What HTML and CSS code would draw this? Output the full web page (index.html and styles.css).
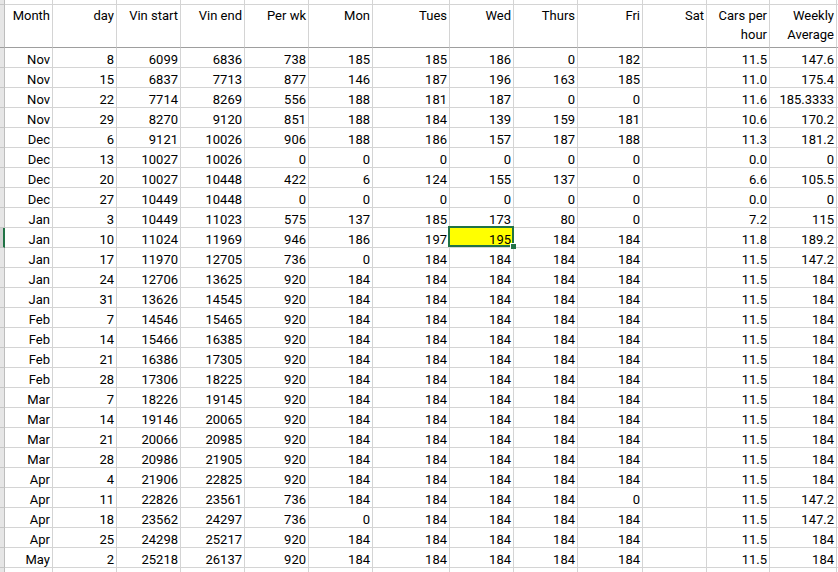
FILE: index.html
```html
<!DOCTYPE html>
<html>
<head>
<meta charset="utf-8">
<link rel="stylesheet" href="styles.css">
</head>
<body>
<div class="sheet">
  <div class="row top"><i class="rh"></i><span></span><span></span><span></span><span></span><span></span><span></span><span></span><span></span><span></span><span></span><span></span><span></span><span></span><span class="x"></span></div>
  <div class="row hdr"><i class="rh"></i><span>Month</span><span>day</span><span>Vin start</span><span>Vin end</span><span>Per wk</span><span>Mon</span><span>Tues</span><span>Wed</span><span>Thurs</span><span>Fri</span><span>Sat</span><span>Cars per hour</span><span>Weekly Average</span><span class="x"></span></div>
  <div class="row"><i class="rh"></i><span>Nov</span><span>8</span><span>6099</span><span>6836</span><span>738</span><span>185</span><span>185</span><span>186</span><span>0</span><span>182</span><span></span><span>11.5</span><span>147.6</span><span class="x"></span></div>
  <div class="row"><i class="rh"></i><span>Nov</span><span>15</span><span>6837</span><span>7713</span><span>877</span><span>146</span><span>187</span><span>196</span><span>163</span><span>185</span><span></span><span>11.0</span><span>175.4</span><span class="x"></span></div>
  <div class="row"><i class="rh"></i><span>Nov</span><span>22</span><span>7714</span><span>8269</span><span>556</span><span>188</span><span>181</span><span>187</span><span>0</span><span>0</span><span></span><span>11.6</span><span>185.3333</span><span class="x"></span></div>
  <div class="row"><i class="rh"></i><span>Nov</span><span>29</span><span>8270</span><span>9120</span><span>851</span><span>188</span><span>184</span><span>139</span><span>159</span><span>181</span><span></span><span>10.6</span><span>170.2</span><span class="x"></span></div>
  <div class="row"><i class="rh"></i><span>Dec</span><span>6</span><span>9121</span><span>10026</span><span>906</span><span>188</span><span>186</span><span>157</span><span>187</span><span>188</span><span></span><span>11.3</span><span>181.2</span><span class="x"></span></div>
  <div class="row"><i class="rh"></i><span>Dec</span><span>13</span><span>10027</span><span>10026</span><span>0</span><span>0</span><span>0</span><span>0</span><span>0</span><span>0</span><span></span><span>0.0</span><span>0</span><span class="x"></span></div>
  <div class="row"><i class="rh"></i><span>Dec</span><span>20</span><span>10027</span><span>10448</span><span>422</span><span>6</span><span>124</span><span>155</span><span>137</span><span>0</span><span></span><span>6.6</span><span>105.5</span><span class="x"></span></div>
  <div class="row"><i class="rh"></i><span>Dec</span><span>27</span><span>10449</span><span>10448</span><span>0</span><span>0</span><span>0</span><span>0</span><span>0</span><span>0</span><span></span><span>0.0</span><span>0</span><span class="x"></span></div>
  <div class="row"><i class="rh"></i><span>Jan</span><span>3</span><span>10449</span><span>11023</span><span>575</span><span>137</span><span>185</span><span>173</span><span>80</span><span>0</span><span></span><span>7.2</span><span>115</span><span class="x"></span></div>
  <div class="row"><i class="rh sel"></i><span>Jan</span><span>10</span><span>11024</span><span>11969</span><span>946</span><span>186</span><span>197</span><span class="active">195</span><span>184</span><span>184</span><span></span><span>11.8</span><span>189.2</span><span class="x"></span></div>
  <div class="row"><i class="rh"></i><span>Jan</span><span>17</span><span>11970</span><span>12705</span><span>736</span><span>0</span><span>184</span><span>184</span><span>184</span><span>184</span><span></span><span>11.5</span><span>147.2</span><span class="x"></span></div>
  <div class="row"><i class="rh"></i><span>Jan</span><span>24</span><span>12706</span><span>13625</span><span>920</span><span>184</span><span>184</span><span>184</span><span>184</span><span>184</span><span></span><span>11.5</span><span>184</span><span class="x"></span></div>
  <div class="row"><i class="rh"></i><span>Jan</span><span>31</span><span>13626</span><span>14545</span><span>920</span><span>184</span><span>184</span><span>184</span><span>184</span><span>184</span><span></span><span>11.5</span><span>184</span><span class="x"></span></div>
  <div class="row"><i class="rh"></i><span>Feb</span><span>7</span><span>14546</span><span>15465</span><span>920</span><span>184</span><span>184</span><span>184</span><span>184</span><span>184</span><span></span><span>11.5</span><span>184</span><span class="x"></span></div>
  <div class="row"><i class="rh"></i><span>Feb</span><span>14</span><span>15466</span><span>16385</span><span>920</span><span>184</span><span>184</span><span>184</span><span>184</span><span>184</span><span></span><span>11.5</span><span>184</span><span class="x"></span></div>
  <div class="row"><i class="rh"></i><span>Feb</span><span>21</span><span>16386</span><span>17305</span><span>920</span><span>184</span><span>184</span><span>184</span><span>184</span><span>184</span><span></span><span>11.5</span><span>184</span><span class="x"></span></div>
  <div class="row"><i class="rh"></i><span>Feb</span><span>28</span><span>17306</span><span>18225</span><span>920</span><span>184</span><span>184</span><span>184</span><span>184</span><span>184</span><span></span><span>11.5</span><span>184</span><span class="x"></span></div>
  <div class="row"><i class="rh"></i><span>Mar</span><span>7</span><span>18226</span><span>19145</span><span>920</span><span>184</span><span>184</span><span>184</span><span>184</span><span>184</span><span></span><span>11.5</span><span>184</span><span class="x"></span></div>
  <div class="row"><i class="rh"></i><span>Mar</span><span>14</span><span>19146</span><span>20065</span><span>920</span><span>184</span><span>184</span><span>184</span><span>184</span><span>184</span><span></span><span>11.5</span><span>184</span><span class="x"></span></div>
  <div class="row"><i class="rh"></i><span>Mar</span><span>21</span><span>20066</span><span>20985</span><span>920</span><span>184</span><span>184</span><span>184</span><span>184</span><span>184</span><span></span><span>11.5</span><span>184</span><span class="x"></span></div>
  <div class="row"><i class="rh"></i><span>Mar</span><span>28</span><span>20986</span><span>21905</span><span>920</span><span>184</span><span>184</span><span>184</span><span>184</span><span>184</span><span></span><span>11.5</span><span>184</span><span class="x"></span></div>
  <div class="row"><i class="rh"></i><span>Apr</span><span>4</span><span>21906</span><span>22825</span><span>920</span><span>184</span><span>184</span><span>184</span><span>184</span><span>184</span><span></span><span>11.5</span><span>184</span><span class="x"></span></div>
  <div class="row"><i class="rh"></i><span>Apr</span><span>11</span><span>22826</span><span>23561</span><span>736</span><span>184</span><span>184</span><span>184</span><span>184</span><span>0</span><span></span><span>11.5</span><span>147.2</span><span class="x"></span></div>
  <div class="row"><i class="rh"></i><span>Apr</span><span>18</span><span>23562</span><span>24297</span><span>736</span><span>0</span><span>184</span><span>184</span><span>184</span><span>184</span><span></span><span>11.5</span><span>147.2</span><span class="x"></span></div>
  <div class="row"><i class="rh"></i><span>Apr</span><span>25</span><span>24298</span><span>25217</span><span>920</span><span>184</span><span>184</span><span>184</span><span>184</span><span>184</span><span></span><span>11.5</span><span>184</span><span class="x"></span></div>
  <div class="row"><i class="rh"></i><span>May</span><span>2</span><span>25218</span><span>26137</span><span>920</span><span>184</span><span>184</span><span>184</span><span>184</span><span>184</span><span></span><span>11.5</span><span>184</span><span class="x"></span></div>
  <div class="row"><i class="rh"></i><span></span><span></span><span></span><span></span><span></span><span></span><span></span><span></span><span></span><span></span><span></span><span></span><span></span><span class="x"></span></div>
</div>
</body>
</html>
```

FILE: styles.css
```css
html, body {
  margin: 0;
  padding: 0;
  background: #ffffff;
  overflow: hidden;
}

.sheet {
  display: grid;
  grid-template-columns: 5px 48px 64px 64px 64px 64px 64px 77px 64px 64px 65px 64px 63px 67px 1fr;
  grid-template-rows: 5px 43px repeat(26, 20px) 20px;
  width: 838px;
  height: 572px;
  overflow: hidden;
  font-family: Roboto, "Liberation Sans", sans-serif;
  font-size: 13px;
  color: #000000;
}

.row {
  display: contents;
}

.row > span {
  box-sizing: border-box;
  display: flex;
  align-items: flex-end;
  justify-content: flex-end;
  text-align: right;
  padding-right: 2px;
  line-height: 15px;
  border-right: 1px solid #d4d4d4;
  border-bottom: 1px solid #d4d4d4;
  white-space: nowrap;
}

.row > .rh {
  box-sizing: border-box;
  display: block;
  background: #e6e6e6;
  border-right: 1px solid #bdbdbd;
  border-bottom: 1px solid #c6c6c6;
}

.row > .rh.sel {
  background: #d2d2d2;
  border-right: 2px solid #217346;
}

.hdr > span {
  align-items: flex-start;
  padding-top: 2px;
  line-height: 18.5px;
  white-space: normal;
  border-bottom-color: #9e9e9e;
}

.hdr > .rh {
  border-bottom-color: #9e9e9e;
}

.row > .x {
  border-right: none;
}

.row > .active {
  position: relative;
  background: #ffff00;
}

.active::before {
  content: "";
  position: absolute;
  left: -2px;
  top: -2px;
  right: -1px;
  bottom: 0;
  border: 2px solid #217346;
}

.active::after {
  content: "";
  position: absolute;
  right: -3px;
  bottom: -2px;
  width: 5px;
  height: 5px;
  background: #217346;
  border-left: 1px solid #ffffff;
  border-top: 1px solid #ffffff;
}
```
